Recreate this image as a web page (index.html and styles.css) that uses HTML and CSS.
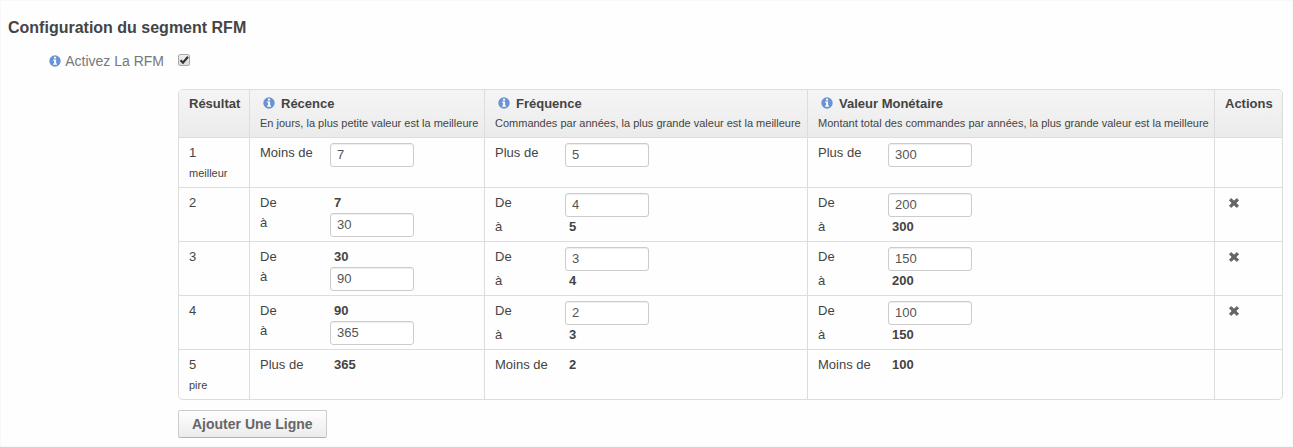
FILE: index.html
```html
<!DOCTYPE html>
<html lang="fr">
<head>
<meta charset="utf-8">
<title>Configuration du segment RFM</title>
<link rel="stylesheet" href="styles.css">
</head>
<body>
<svg class="sprite" aria-hidden="true">
  <symbol id="info" viewBox="0 0 12 12">
    <circle cx="6" cy="6" r="5.7" fill="#6a93d4"/>
    <path d="M5 1.8h2.1v1.7H5zM4.2 4.6h2.9v3.9h.9v1.3H4.2V8.5h.9V5.8h-.9z" fill="#fff"/>
  </symbol>
  <symbol id="cross" viewBox="0 0 10 10">
    <path d="M2.2.4 5 3.1 7.8.4 9.7 2.2 7 5l2.7 2.8-1.9 1.8L5 6.9 2.2 9.6.3 7.8 3 5 .3 2.2z" fill="#666" stroke="#666" stroke-width=".7" stroke-linejoin="round"/>
  </symbol>
</svg>
<main class="panel">
  <h1 class="title">Configuration du segment RFM</h1>
  <div class="form-row">
    <label class="form-label" for="enable"><svg class="info"><use href="#info"/></svg>Activez La RFM</label>
    <input class="check" type="checkbox" id="enable" checked>
  </div>
  <div class="content">
    <table class="grid">
      <colgroup>
        <col class="col-result">
        <col class="col-recency">
        <col class="col-frequency">
        <col class="col-value">
        <col class="col-actions">
      </colgroup>
      <thead>
        <tr>
          <th scope="col">Résultat</th>
          <th scope="col"><span class="head"><svg class="info"><use href="#info"/></svg>Récence</span><span class="hint">En jours, la plus petite valeur est la meilleure</span></th>
          <th scope="col"><span class="head"><svg class="info"><use href="#info"/></svg>Fréquence</span><span class="hint">Commandes par années, la plus grande valeur est la meilleure</span></th>
          <th scope="col"><span class="head"><svg class="info"><use href="#info"/></svg>Valeur Monétaire</span><span class="hint">Montant total des commandes par années, la plus grande valeur est la meilleure</span></th>
          <th scope="col">Actions</th>
        </tr>
      </thead>
      <tbody>
        <tr>
          <td>1<small class="rank">meilleur</small></td>
          <td><div class="line"><label class="name" for="r1">Moins de</label><input class="field" id="r1" type="text" value="7"></div></td>
          <td><div class="line"><label class="name" for="f1">Plus de</label><input class="field" id="f1" type="text" value="5"></div></td>
          <td><div class="line"><label class="name" for="m1">Plus de</label><input class="field" id="m1" type="text" value="300"></div></td>
          <td></td>
        </tr>
        <tr>
          <td>2</td>
          <td><div class="line"><span class="name">De</span><strong class="value">7</strong></div><div class="line"><label class="name" for="r2">à</label><input class="field" id="r2" type="text" value="30"></div></td>
          <td><div class="line"><label class="name" for="f2">De</label><input class="field" id="f2" type="text" value="4"></div><div class="line"><span class="name">à</span><strong class="value">5</strong></div></td>
          <td><div class="line"><label class="name" for="m2">De</label><input class="field" id="m2" type="text" value="200"></div><div class="line"><span class="name">à</span><strong class="value">300</strong></div></td>
          <td><button class="remove" type="button" aria-label="Supprimer"><svg class="cross"><use href="#cross"/></svg></button></td>
        </tr>
        <tr>
          <td>3</td>
          <td><div class="line"><span class="name">De</span><strong class="value">30</strong></div><div class="line"><label class="name" for="r3">à</label><input class="field" id="r3" type="text" value="90"></div></td>
          <td><div class="line"><label class="name" for="f3">De</label><input class="field" id="f3" type="text" value="3"></div><div class="line"><span class="name">à</span><strong class="value">4</strong></div></td>
          <td><div class="line"><label class="name" for="m3">De</label><input class="field" id="m3" type="text" value="150"></div><div class="line"><span class="name">à</span><strong class="value">200</strong></div></td>
          <td><button class="remove" type="button" aria-label="Supprimer"><svg class="cross"><use href="#cross"/></svg></button></td>
        </tr>
        <tr>
          <td>4</td>
          <td><div class="line"><span class="name">De</span><strong class="value">90</strong></div><div class="line"><label class="name" for="r4">à</label><input class="field" id="r4" type="text" value="365"></div></td>
          <td><div class="line"><label class="name" for="f4">De</label><input class="field" id="f4" type="text" value="2"></div><div class="line"><span class="name">à</span><strong class="value">3</strong></div></td>
          <td><div class="line"><label class="name" for="m4">De</label><input class="field" id="m4" type="text" value="100"></div><div class="line"><span class="name">à</span><strong class="value">150</strong></div></td>
          <td><button class="remove" type="button" aria-label="Supprimer"><svg class="cross"><use href="#cross"/></svg></button></td>
        </tr>
        <tr>
          <td>5<small class="rank">pire</small></td>
          <td><div class="line"><span class="name">Plus de</span><strong class="value">365</strong></div></td>
          <td><div class="line"><span class="name">Moins de</span><strong class="value">2</strong></div></td>
          <td><div class="line"><span class="name">Moins de</span><strong class="value">100</strong></div></td>
          <td></td>
        </tr>
      </tbody>
    </table>
    <button class="add" type="button">Ajouter Une Ligne</button>
  </div>
</main>
</body>
</html>
```
FILE: styles.css
```css
* {
  box-sizing: border-box;
}

body {
  margin: 0;
  background: #fefefe;
  color: #444;
  font: 13px/20px "Liberation Sans", Arial, sans-serif;
}

.sprite {
  position: absolute;
  width: 0;
  height: 0;
}

.panel {
  min-height: 100vh;
  padding: 17px 9px 8px 7px;
  border: 1px solid #f8f8f8;
}

.title {
  margin: 0;
  font-size: 16px;
  line-height: 20px;
}

.form-row {
  display: flex;
  gap: 14px;
  margin-top: 13px;
}

.form-label {
  width: 156px;
  color: #777;
  font-size: 14px;
  text-align: right;
  white-space: nowrap;
}

.info {
  width: 12px;
  height: 12px;
  margin-right: 6px;
  vertical-align: -1px;
}

.form-label .info {
  margin-right: 4px;
}

.check {
  appearance: none;
  width: 12px;
  height: 12px;
  margin: 3px 0 0;
  border: 1px solid #aaa;
  border-radius: 2px;
  background: linear-gradient(#eee, #ddd);
}

.check:checked {
  background: url("data:image/svg+xml,%3Csvg xmlns='http://www.w3.org/2000/svg' viewBox='0 0 10 10'%3E%3Cpath d='M1.5 5.2 4 7.7 9 1.7' fill='none' stroke='%23333' stroke-width='2.2'/%3E%3C/svg%3E"), linear-gradient(#eee, #ddd);
}

.content {
  margin: 18px 0 0 170px;
}

.grid {
  width: 100%;
  table-layout: fixed;
  border: 1px solid #ddd;
  border-radius: 5px;
  border-spacing: 0;
  overflow: hidden;
}

.col-result {
  width: 70px;
}

.col-recency {
  width: 235px;
}

.col-frequency {
  width: 323px;
}

.col-actions {
  width: 68px;
}

.grid th,
.grid td {
  text-align: left;
  vertical-align: top;
}

.grid th {
  padding: 4px 4px 4px 10px;
  background: linear-gradient(#f5f5f5, #ebebeb);
  white-space: nowrap;
}

.grid td {
  padding: 5px 10px 4px;
  border-top: 1px solid #ddd;
}

.grid th + th,
.grid td + td {
  border-left: 1px solid #ddd;
}

.head {
  display: block;
  padding-left: 3px;
}

.hint {
  display: block;
  font-size: 11px;
  font-weight: normal;
  line-height: 19px;
}

.rank {
  display: block;
  font-size: 11px;
  line-height: 20px;
}

.line {
  display: flex;
}

.name {
  flex: 0 0 70px;
}

.value {
  padding-left: 4px;
}

.field {
  width: 84px;
  height: 24px;
  padding: 0 6px 2px;
  border: 1px solid #ccc;
  border-radius: 3px;
  background: #fff;
  box-shadow: inset 0 1px 1px #eee;
  color: #555;
  font: inherit;
}

.remove {
  display: flex;
  align-items: center;
  height: 20px;
  padding: 0 4px;
  border: 0;
  background: none;
}

.cross {
  width: 10px;
  height: 10px;
}

.add {
  display: block;
  height: 28px;
  margin-top: 10px;
  padding: 0 13px;
  border: 1px solid #ccc;
  border-bottom-color: #b3b3b3;
  border-radius: 2px;
  background: linear-gradient(#fefefe, #ececec);
  color: #666;
  font: bold 14px/20px "Liberation Sans", Arial, sans-serif;
}
```
